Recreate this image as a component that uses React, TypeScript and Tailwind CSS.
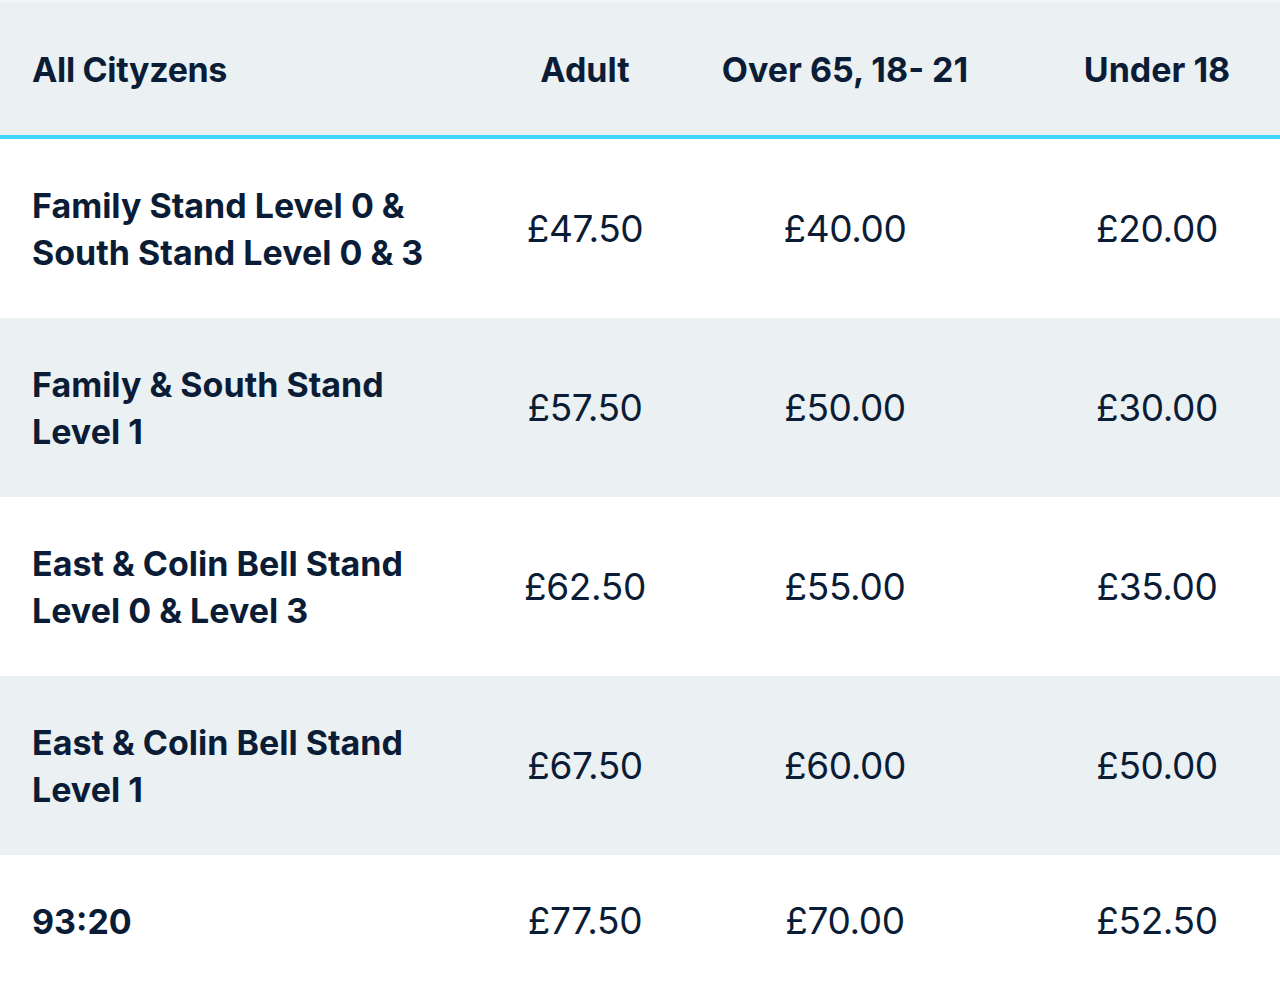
const rows = [
  { name: ["Family Stand Level 0 &", "South Stand Level 0 & 3"], adult: "£47.50", concession: "£40.00", junior: "£20.00" },
  { name: ["Family & South Stand", "Level 1"], adult: "£57.50", concession: "£50.00", junior: "£30.00" },
  { name: ["East & Colin Bell Stand", "Level 0 & Level 3"], adult: "£62.50", concession: "£55.00", junior: "£35.00" },
  { name: ["East & Colin Bell Stand", "Level 1"], adult: "£67.50", concession: "£60.00", junior: "£50.00" },
  { name: ["93:20"], adult: "£77.50", concession: "£70.00", junior: "£52.50" },
];

const cols = "grid grid-cols-[500px_170px_350px_1fr] items-center";

export default function App() {
  return (
    <div className="min-h-screen w-[1280px] bg-white text-[#0b1d36] font-['Inter','Liberation_Sans',sans-serif]">
      <div className="h-[3px] bg-[#f2f5f7]" />
      <div className={`${cols} h-[136px] bg-[#ebf0f3] border-b-4 border-[#3fd5fd] text-[34px] font-bold`}>
        <div className="pl-8 tracking-[-0.01em]">All Cityzens</div>
        <div className="text-center">Adult</div>
        <div className="text-center">Over 65, 18- 21</div>
        <div className="text-center pl-[14px]">Under 18</div>
      </div>
      {rows.map((r, i) => (
        <div
          key={i}
          className={`${cols} ${r.name.length > 1 ? "h-[179px]" : "h-[132px]"} ${i % 2 === 1 ? "bg-[#ebf0f3]" : "bg-white"}`}
        >
          <div className="pl-8 text-[34px] font-bold leading-[47px]">
            {r.name.map((l) => (
              <div key={l}>{l}</div>
            ))}
          </div>
          <div className="text-center text-[37px] tracking-[-0.01em]">{r.adult}</div>
          <div className="text-center text-[37px] tracking-[-0.01em]">{r.concession}</div>
          <div className="text-center text-[37px] tracking-[-0.01em] pl-[14px]">{r.junior}</div>
        </div>
      ))}
    </div>
  );
}
